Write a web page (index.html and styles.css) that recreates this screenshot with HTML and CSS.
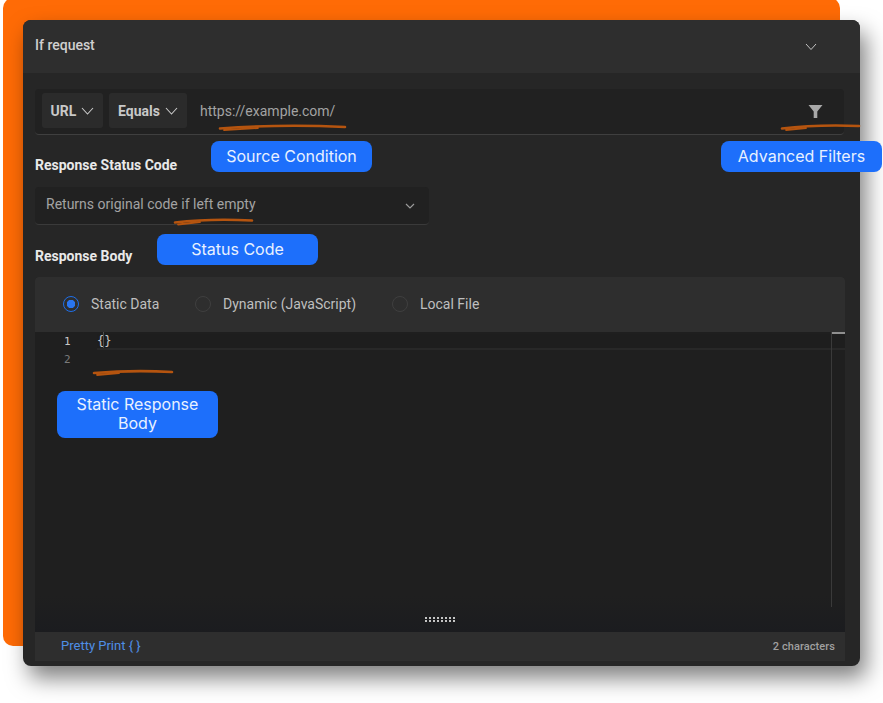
FILE: index.html
```html
<!DOCTYPE html>
<html lang="en">
<head>
<meta charset="utf-8">
<title>If request</title>
<link rel="stylesheet" href="styles.css">
</head>
<body>
<div class="stage">
  <div class="backdrop"></div>
  <main class="card">
    <header class="card-head">
      <span class="card-title">If request</span>
      <svg class="head-chevron" width="12" height="8" viewBox="0 0 12 8"><path d="M1 1l5 5.500 5-5.500" fill="none" stroke="#c4c4c4" stroke-width="1"/></svg>
    </header>
    <div class="card-body">
      <div class="condition">
        <div class="pill pill-url">URL <svg width="13" height="8" viewBox="0 0 13 8"><path d="M1 1l5.500 6 5.500-6" fill="none" stroke="#c9c9c9" stroke-width="1.100"/></svg></div>
        <div class="pill pill-eq">Equals <svg width="13" height="8" viewBox="0 0 13 8"><path d="M1 1l5.500 6 5.500-6" fill="none" stroke="#c9c9c9" stroke-width="1.100"/></svg></div>
        <span class="url-text">https://example.com/</span>
        <svg class="filter" width="15" height="15" viewBox="0 0 15 15"><path d="M0.500 1h14L9.300 7.400V14H5.700V7.400z" fill="#a8a8a8"/></svg>
      </div>
      <h2 class="label label-status">Response Status Code</h2>
      <div class="select">
        <span>Returns original code if left empty</span>
        <svg width="10" height="6" viewBox="0 0 10 6"><path d="M1 1l4 4 4-4" fill="none" stroke="#9a9a9a" stroke-width="1.200"/></svg>
      </div>
      <h2 class="label label-body">Response Body</h2>
      <section class="panel">
        <div class="radios">
          <label class="radio radio-static"><i class="dot dot-on"></i>Static Data</label>
          <label class="radio radio-dyn"><i class="dot"></i>Dynamic (JavaScript)</label>
          <label class="radio"><i class="dot"></i>Local File</label>
        </div>
        <div class="editor">
          <div class="line line-active"><span class="ln ln-active">1</span><span class="code">{}</span></div>
          <div class="line"><span class="ln">2</span></div>
          <i class="caret"></i>
          <i class="scroll-cap"></i>
          <i class="scroll-line"></i>
          <div class="grip"></div>
        </div>
        <footer class="panel-foot">
          <span class="pretty">Pretty Print { }</span>
          <span class="count">2 characters</span>
        </footer>
      </section>
    </div>
  </main>

  <svg class="scribble" width="883" height="703" viewBox="0 0 883 703">
    <g fill="none" stroke="#b5540f" stroke-linecap="round">
      <path d="M220 128.500c40-3 85-3.500 125-1.500" stroke-width="2.600"/>
      <path d="M224 130l34-2" stroke-width="1.800"/>
      <path d="M782 128.500c25-3 50-3.500 77-2.500" stroke-width="2.600"/>
      <path d="M786 130l20-2" stroke-width="1.800"/>
      <path d="M175 222.500c25-3 50-3.500 77-2" stroke-width="2.600"/>
      <path d="M178 224.500l22-2.500" stroke-width="1.800"/>
      <path d="M94 373c25-2 50-2.500 78-1" stroke-width="2.600"/>
      <path d="M97 375l22-2" stroke-width="1.800"/>
    </g>
  </svg>
  <div class="tag tag-source">Source Condition</div>
  <div class="tag tag-filters">Advanced Filters</div>
  <div class="tag tag-code">Status Code</div>
  <div class="tag tag-static">Static Response Body</div>
</div>
</body>
</html>
```
FILE: styles.css
```css
* { box-sizing: border-box; }
html, body { margin: 0; padding: 0; background: #fff; }
body { font-family: Roboto, "Liberation Sans", sans-serif; }
.stage { position: relative; width: 883px; height: 703px; overflow: hidden; padding: 20px 0 0 23px; }
.backdrop { position: absolute; left: 3px; top: -2px; width: 837px; height: 648px; background: #ff6b06; border-radius: 10px; }
.card { position: relative; width: 837px; height: 646px; background: #262626; border-radius: 8px; box-shadow: 6px 12px 22px rgba(0,0,0,.5); display: flex; flex-direction: column; overflow: hidden; }
.card-head { height: 53px; flex: none; background: #2e2e2e; display: flex; align-items: center; justify-content: space-between; padding: 0 43px 0 12px; }
.card-title { font-size: 14px; font-weight: 500; color: #d0d0d0; position: relative; top: -2px; }
.head-chevron { margin-top: 1px; }
.card-body { flex: 1; padding: 16px 15px 5px 12px; display: flex; flex-direction: column; min-height: 0; }
.condition { height: 46px; margin-right: 1px; background: #212121; border-radius: 4px; border-bottom: 1px solid #3f3f3f; display: flex; align-items: center; padding: 0 21px 0 7px; flex: none; }
.pill { height: 35px; margin-top: -2px; background: #2b2b2b; border-radius: 3px; display: flex; align-items: center; justify-content: center; gap: 5px; font-size: 14px; font-weight: 700; color: #c8c8c8; }
.pill-url { width: 61px; }
.pill-eq { width: 78px; margin-left: 6px; }
.url-text { margin-left: 13px; margin-top: -2px; font-size: 14px; color: #a3a3a3; }
.filter { margin-left: auto; margin-top: -1px; }
.label { margin: 0; font-size: 14px; font-weight: 700; color: #e9e9e9; line-height: 18px; }
.label-status { margin-top: 21px; }
.select { width: 394px; height: 38px; margin-top: 13px; background: #212121; border-radius: 4px; border-bottom: 1px solid #3a3a3a; display: flex; align-items: center; justify-content: space-between; padding: 0 14px 3px 11px; font-size: 14px; color: #a3a3a3; flex: none; }
.select svg { margin-top: 3px; }
.label-body { margin-top: 22px; }
.panel { width: 810px; margin-top: 12px; flex: 1; background: #212121; border-radius: 4px 4px 0 0; display: flex; flex-direction: column; min-height: 0; }
.radios { height: 55px; background: #2e2e2e; display: flex; align-items: center; padding: 0 0 2px 28px; flex: none; border-radius: 4px 4px 0 0; }
.radio { display: flex; align-items: center; gap: 12px; font-size: 14px; color: #bfbfbf; }
.radio-static { width: 132px; }
.radio-dyn { width: 197px; }
.dot { width: 16px; height: 16px; border-radius: 50%; border: 1px solid #3f3f3f; display: block; }
.dot-on { border: 1.500px solid #1f6fe8; background: radial-gradient(circle, #2a75ee 0 4px, transparent 4.500px); }
.editor { position: relative; flex: 1; background: linear-gradient(#1f1f1f 0, #1f1f1f 88%, #1b1c1f 100%); min-height: 0; padding-top: 2px; font-family: "DejaVu Sans Mono", "Liberation Mono", monospace; font-size: 11px; }
.line { height: 18px; display: flex; align-items: center; }
.line-active { background: #1e1e1e; border-bottom: 2px solid #282828; margin-left: 62px; position: relative; height: 16px; }
.ln { width: 62px; padding-left: 29px; color: #7a7a7a; flex: none; }
.ln-active { color: #c8c8c8; position: absolute; left: -62px; }
.code { color: #c8c8c8; font-size: 12px; }
.caret { position: absolute; left: 68px; top: 0; width: 1px; height: 16px; background: #4d4d4d; }
.scroll-cap { position: absolute; left: 796px; top: 0; width: 14px; height: 2px; background: #8f8f8f; }
.scroll-line { position: absolute; left: 796px; top: 0; width: 1px; height: 275px; background: #3a3a3a; }
.grip { position: absolute; left: 390px; top: 285px; width: 30px; height: 5px; background-image: conic-gradient(at 2px 2px, #c4c4c4 25%, transparent 0); background-size: 4px 3px; background-position: 2px 0; }
.panel-foot { height: 29px; flex: none; background: #2e2e2e; display: flex; align-items: center; justify-content: space-between; padding: 0 10px 2px 26px; }
.pretty { font-size: 13px; font-weight: 400; color: #4f8fe6; }
.count { font-size: 11px; font-weight: 500; color: #a0a0a0; letter-spacing: .08px; position: relative; top: 1px; }
.scribble { position: absolute; left: 0; top: 0; pointer-events: none; }
.tag { position: absolute; background: #1d6ffb; color: #e8f1ff; border-radius: 8px; font-family: Inter, "Liberation Sans", sans-serif; font-size: 16px; line-height: 19px; text-align: center; display: flex; align-items: center; justify-content: center; }
.tag-source { left: 211px; top: 141px; width: 161px; height: 31px; }
.tag-filters { left: 721px; top: 141px; width: 161px; height: 31px; }
.tag-code { left: 157px; top: 234px; width: 161px; height: 31px; }
.tag-static { left: 57px; top: 391px; width: 161px; height: 47px; padding-bottom: 2px; }
```
